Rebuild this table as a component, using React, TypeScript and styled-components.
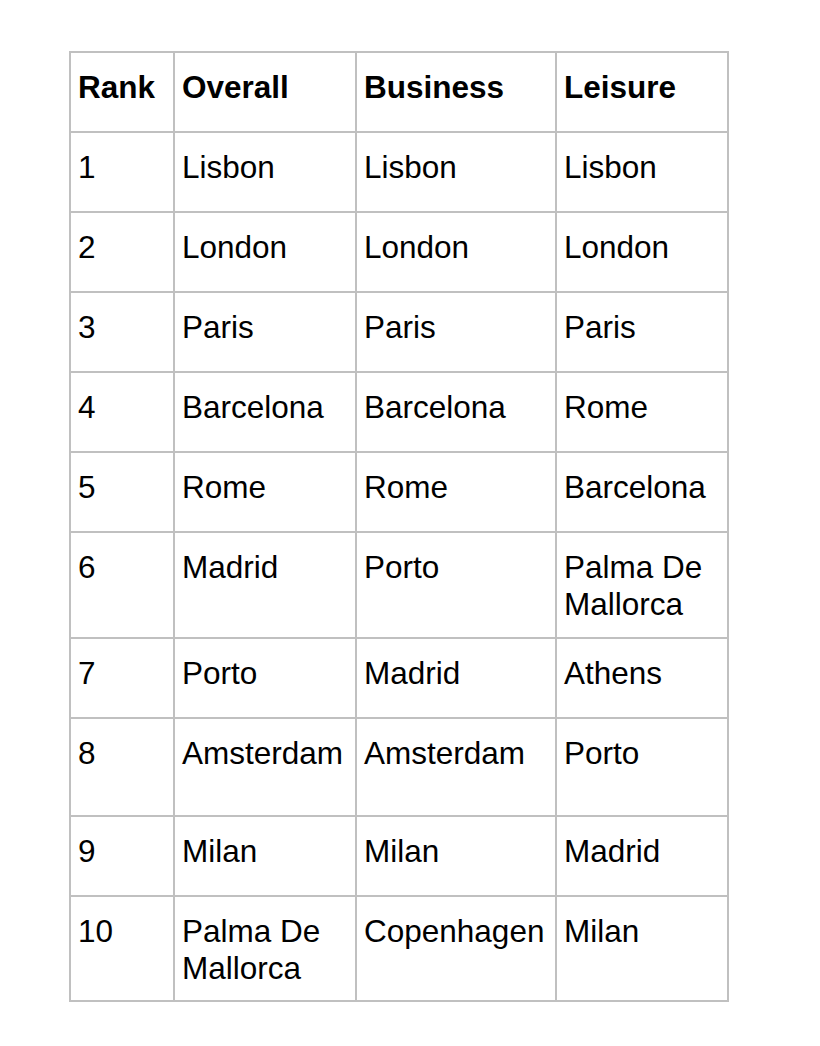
import React from 'react';
import styled, { createGlobalStyle } from 'styled-components';

const GlobalStyle = createGlobalStyle`
  html, body {
    margin: 0;
    padding: 0;
    background: #ffffff;
  }
  body {
    font-family: 'Liberation Sans', Arial, sans-serif;
    color: #000000;
  }
`;

const Page = styled.div`
  padding: 51px 0 0 69px;
`;

const Table = styled.table`
  border-collapse: collapse;
  table-layout: fixed;
  width: 660px;
  font-size: 31.5px;
  line-height: 37px;
`;

const Row = styled.tr<{ $height?: number }>`
  height: ${({ $height }) => $height ?? 80}px;
`;

const Cell = styled.td<{ $header?: boolean }>`
  border: 2px solid #c0c0c0;
  padding: 16px 6px 13px 7px;
  vertical-align: top;
  text-align: left;
  font-weight: ${({ $header }) => ($header ? 700 : 400)};
`;

const columns = [104, 182, 200, 172];

const headers = ['Rank', 'Overall', 'Business', 'Leisure'];

const rows: { cells: string[]; height?: number }[] = [
  { cells: ['1', 'Lisbon', 'Lisbon', 'Lisbon'] },
  { cells: ['2', 'London', 'London', 'London'] },
  { cells: ['3', 'Paris', 'Paris', 'Paris'] },
  { cells: ['4', 'Barcelona', 'Barcelona', 'Rome'] },
  { cells: ['5', 'Rome', 'Rome', 'Barcelona'] },
  { cells: ['6', 'Madrid', 'Porto', 'Palma De Mallorca'], height: 106 },
  { cells: ['7', 'Porto', 'Madrid', 'Athens'] },
  { cells: ['8', 'Amsterdam', 'Amsterdam', 'Porto'], height: 98 },
  { cells: ['9', 'Milan', 'Milan', 'Madrid'] },
  { cells: ['10', 'Palma De Mallorca', 'Copenhagen', 'Milan'], height: 105 },
];

const App = () => (
  <>
    <GlobalStyle />
    <Page>
      <Table>
        <colgroup>
          {columns.map((w, i) => (
            <col key={i} style={{ width: w }} />
          ))}
        </colgroup>
        <thead>
          <Row>
            {headers.map((h) => (
              <Cell as="th" key={h} $header>
                {h}
              </Cell>
            ))}
          </Row>
        </thead>
        <tbody>
          {rows.map((r) => (
            <Row key={r.cells[0]} $height={r.height}>
              {r.cells.map((c, i) => (
                <Cell key={i}>{c}</Cell>
              ))}
            </Row>
          ))}
        </tbody>
      </Table>
    </Page>
  </>
);

export default App;
